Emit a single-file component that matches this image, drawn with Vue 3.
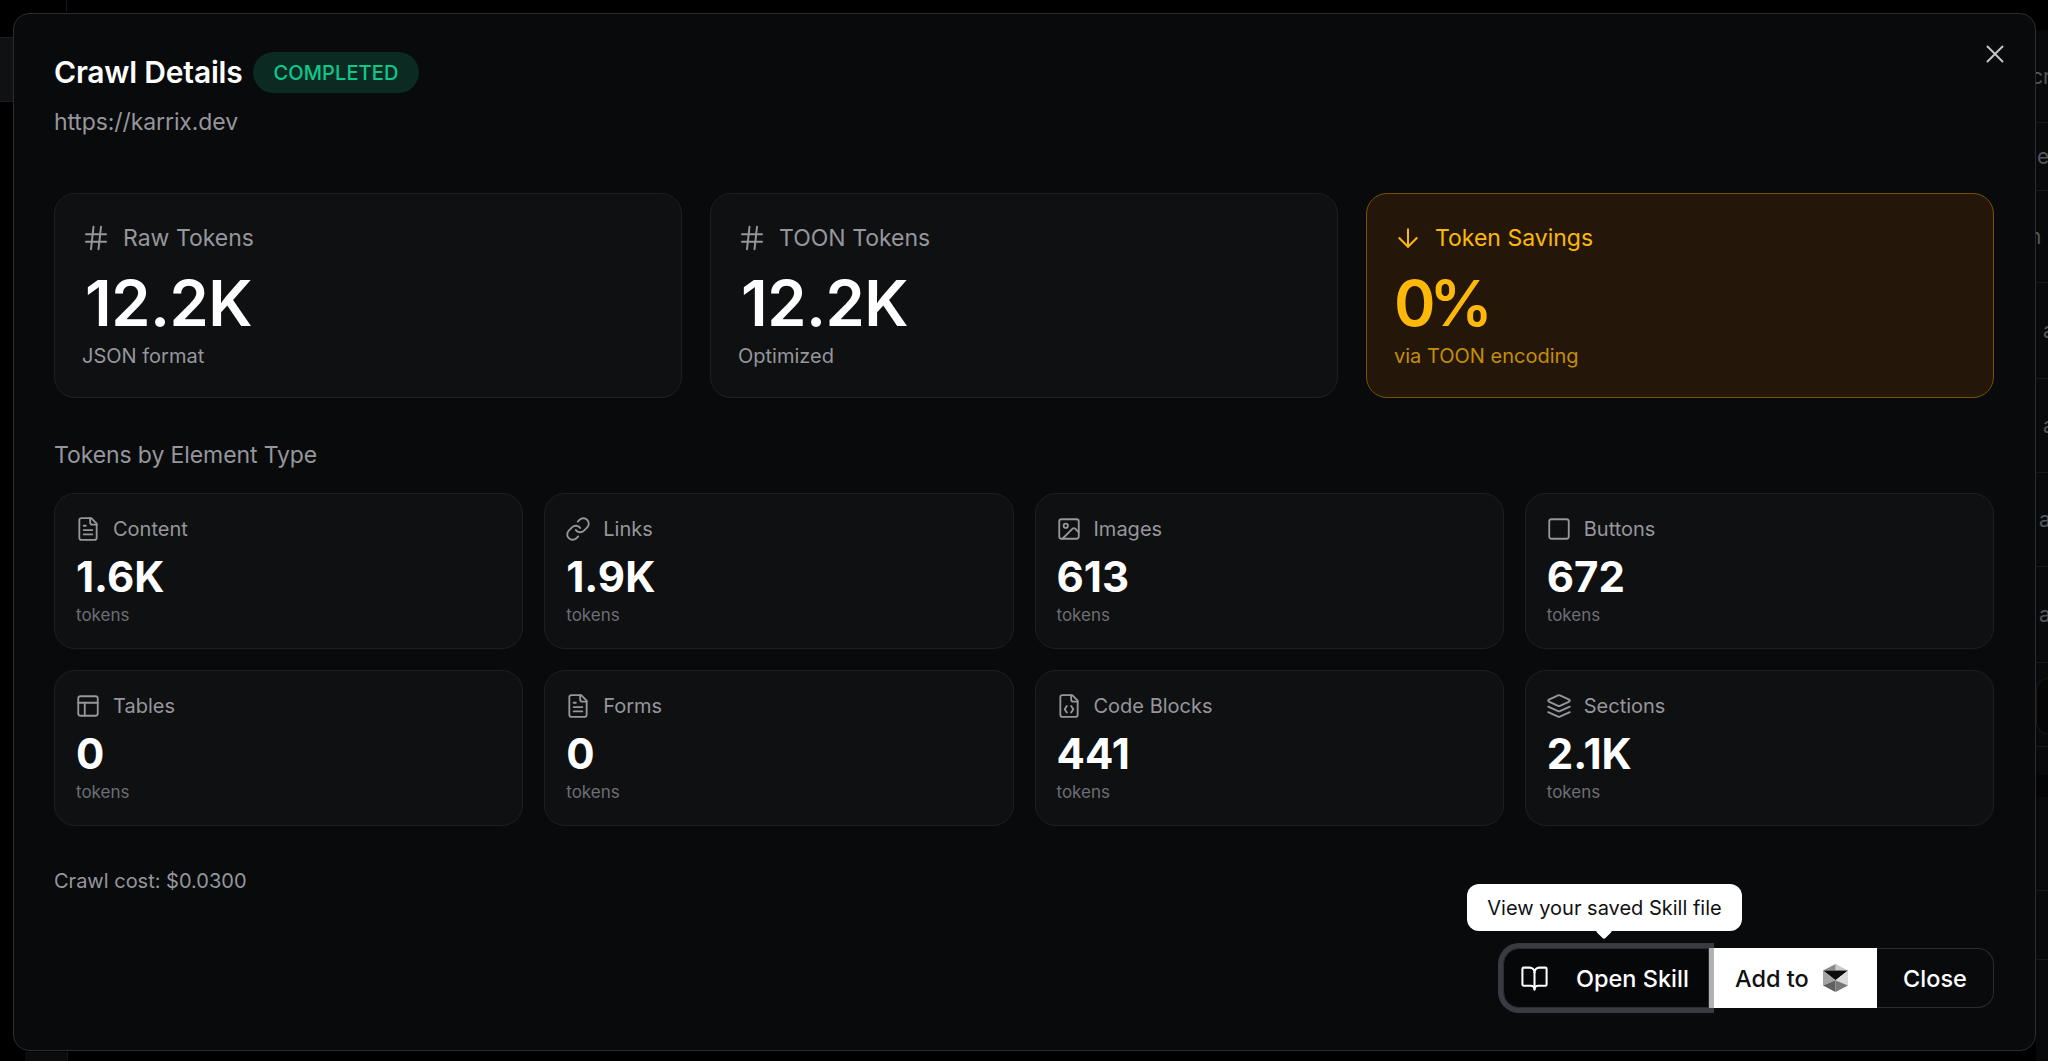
<script setup>
const topStats = [
  { label: 'Raw Tokens', value: '12.2K', note: 'JSON format', icon: 'hash' },
  { label: 'TOON Tokens', value: '12.2K', note: 'Optimized', icon: 'hash' },
  { label: 'Token Savings', value: '0%', note: 'via TOON encoding', icon: 'arrow', accent: true }
]

const elements = [
  { label: 'Content', value: '1.6K', icon: 'file' },
  { label: 'Links', value: '1.9K', icon: 'link' },
  { label: 'Images', value: '613', icon: 'image' },
  { label: 'Buttons', value: '672', icon: 'square' },
  { label: 'Tables', value: '0', icon: 'table' },
  { label: 'Forms', value: '0', icon: 'file' },
  { label: 'Code Blocks', value: '441', icon: 'code' },
  { label: 'Sections', value: '2.1K', icon: 'layers' }
]

// table rows of the page behind the modal, only their ends stick out
const behindRows = [
  { text: 'cr', height: 93, indent: -5 },
  { text: 'e', height: 68, indent: 1 },
  { text: 'n', height: 92, indent: -7 },
  { text: 'a', height: 96, indent: 7 },
  { text: 'a', height: 94, indent: 7 },
  { text: 'a', height: 94, indent: 0, bar: true },
  { text: 'a', height: 96, indent: 0, bar: true }
]
</script>

<template>
  <div class="page">
    <div class="behind-tick"></div>
    <div class="behind-left"></div>
    <div class="behind-right">
      <div
        v-for="(row, i) in behindRows"
        :key="i"
        class="behind-row"
        :style="{ height: row.height + 'px' }"
      >
        <i v-if="row.bar" class="behind-bar"></i>
        <span :style="{ marginLeft: row.indent + 'px' }">{{ row.text }}</span>
      </div>
      <div class="behind-box"><span></span></div>
      <div class="behind-band"></div>
      <div class="behind-line"></div>
      <div class="behind-line short"></div>
    </div>
    <div class="behind-bottom"></div>

    <section class="modal">
      <button class="x-btn" aria-label="Close">
        <svg viewBox="0 0 24 24" width="30" height="30" fill="none" stroke="currentColor" stroke-width="1.6" stroke-linecap="round" stroke-linejoin="round">
          <path d="M18 6 6 18" /><path d="m6 6 12 12" />
        </svg>
      </button>

      <header class="head">
        <div class="title-row">
          <h2>Crawl Details</h2>
          <span class="badge">COMPLETED</span>
        </div>
        <p class="url">https://karrix.dev</p>
      </header>

      <div class="top-grid">
        <div v-for="s in topStats" :key="s.label" :class="['top-card', { accent: s.accent }]">
          <div class="top-label">
            <svg viewBox="0 0 24 24" width="30" height="30" fill="none" stroke="currentColor" stroke-width="1.6" stroke-linecap="round" stroke-linejoin="round">
              <template v-if="s.icon === 'hash'">
                <line x1="4" x2="20" y1="9" y2="9" /><line x1="4" x2="20" y1="15" y2="15" />
                <line x1="10" x2="8" y1="3" y2="21" /><line x1="16" x2="14" y1="3" y2="21" />
              </template>
              <template v-else>
                <path d="M12 5v14" /><path d="m19 12-7 7-7-7" />
              </template>
            </svg>
            <span>{{ s.label }}</span>
          </div>
          <div class="top-value">{{ s.value }}</div>
          <div class="top-note">{{ s.note }}</div>
        </div>
      </div>

      <h3 class="section-label">Tokens by Element Type</h3>

      <div class="el-grid">
        <div v-for="el in elements" :key="el.label" class="el-card">
          <div class="el-label">
            <svg viewBox="0 0 24 24" width="26" height="26" fill="none" stroke="currentColor" stroke-width="1.7" stroke-linecap="round" stroke-linejoin="round">
              <template v-if="el.icon === 'file'">
                <path d="M15 2H6a2 2 0 0 0-2 2v16a2 2 0 0 0 2 2h12a2 2 0 0 0 2-2V7Z" />
                <path d="M14 2v4a2 2 0 0 0 2 2h4" /><path d="M10 9H8" /><path d="M16 13H8" /><path d="M16 17H8" />
              </template>
              <template v-else-if="el.icon === 'link'">
                <path d="M10 13a5 5 0 0 0 7.54.54l3-3a5 5 0 0 0-7.07-7.07l-1.72 1.71" />
                <path d="M14 11a5 5 0 0 0-7.54-.54l-3 3a5 5 0 0 0 7.07 7.07l1.71-1.71" />
              </template>
              <template v-else-if="el.icon === 'image'">
                <rect width="18" height="18" x="3" y="3" rx="2" /><circle cx="9" cy="9" r="2" />
                <path d="m21 15-3.086-3.086a2 2 0 0 0-2.828 0L6 21" />
              </template>
              <template v-else-if="el.icon === 'square'">
                <rect width="18" height="18" x="3" y="3" rx="2" />
              </template>
              <template v-else-if="el.icon === 'table'">
                <rect width="18" height="18" x="3" y="3" rx="2" /><path d="M3 9h18" /><path d="M9 21V9" />
              </template>
              <template v-else-if="el.icon === 'code'">
                <path d="M15 2H6a2 2 0 0 0-2 2v16a2 2 0 0 0 2 2h12a2 2 0 0 0 2-2V7Z" />
                <path d="M14 2v4a2 2 0 0 0 2 2h4" /><path d="m10 12-2 3 2 3" /><path d="m14 12 2 3-2 3" />
              </template>
              <template v-else>
                <path d="m12.83 2.18a2 2 0 0 0-1.66 0L2.6 6.08a1 1 0 0 0 0 1.83l8.58 3.91a2 2 0 0 0 1.66 0l8.58-3.9a1 1 0 0 0 0-1.83Z" />
                <path d="m22 17.65-9.17 4.16a2 2 0 0 1-1.66 0L2 17.65" /><path d="m22 12.65-9.17 4.16a2 2 0 0 1-1.66 0L2 12.65" />
              </template>
            </svg>
            <span>{{ el.label }}</span>
          </div>
          <div class="el-value">{{ el.value }}</div>
          <div class="el-note">tokens</div>
        </div>
      </div>

      <p class="cost">Crawl cost: $0.0300</p>

      <footer class="actions">
        <div class="tip">View your saved Skill file</div>
        <button class="btn btn-open">
          <svg viewBox="0 0 24 24" width="29" height="29" fill="none" stroke="currentColor" stroke-width="1.7" stroke-linecap="round" stroke-linejoin="round">
            <path d="M12 7v14" />
            <path d="M3 18a1 1 0 0 1-1-1V4a1 1 0 0 1 1-1h5a4 4 0 0 1 4 4 4 4 0 0 1 4-4h5a1 1 0 0 1 1 1v13a1 1 0 0 1-1 1h-6a3 3 0 0 0-3 3 3 3 0 0 0-3-3z" />
          </svg>
          <span>Open Skill</span>
        </button>
        <button class="btn btn-add">
          <span>Add to</span>
          <svg viewBox="2 1 20 26" width="25" height="28" preserveAspectRatio="none">
            <path d="M12 1 22 7 12 7Z" fill="#c9c9c9" /><path d="M12 1 2 7 12 7Z" fill="#8a8a8a" />
            <path d="M2 7H22L12 16Z" fill="#0d0d0d" />
            <path d="M2 7 12 16 2 21Z" fill="#a5a5a5" /><path d="M22 7 12 16 22 21Z" fill="#dcdcdc" />
            <path d="M2 21 12 16 12 27Z" fill="#5f5f5f" /><path d="M22 21 12 16 12 27Z" fill="#777" />
          </svg>
        </button>
        <button class="btn btn-close">Close</button>
      </footer>
    </section>
  </div>
</template>

<style scoped>
.page {
  position: relative;
  height: 1061px;
  overflow: hidden;
  background: #000;
  font-family: Inter, "Liberation Sans", sans-serif;
}

.behind-tick {
  position: absolute;
  left: 66px;
  top: 0;
  width: 1px;
  height: 12px;
  background: #17181a;
}

.behind-left {
  position: absolute;
  left: 0;
  top: 37px;
  width: 13px;
  height: 63px;
  background: #101113;
  border-top: 1px solid #1c1d20;
  border-bottom: 1px solid #1c1d20;
}

.behind-right {
  position: absolute;
  left: 2036px;
  top: 30px;
  width: 12px;
  height: 1031px;
  background: #08090a;
  display: flex;
  flex-direction: column;
}

.behind-row {
  box-sizing: border-box;
  display: flex;
  align-items: center;
  gap: 3px;
  font-size: 21px;
  color: #55565a;
  border-bottom: 1px solid #17181a;
  white-space: nowrap;
}

.behind-bar {
  width: 2px;
  height: 20px;
  background: #55565a;
}

.behind-box {
  height: 84px;
  box-sizing: border-box;
  padding-top: 15px;
  border-bottom: 1px solid #17181a;
}

.behind-box span {
  display: block;
  height: 54px;
  background: #050506;
  border: 1px solid #17181a;
  border-right: none;
  border-radius: 14px 0 0 14px;
}

.behind-band {
  height: 22px;
  margin-top: 28px;
  background: #040405;
}

.behind-line {
  height: 93px;
  border-bottom: 1px solid #17181a;
}

.behind-line.short {
  height: 68px;
}

.behind-bottom {
  position: absolute;
  left: 25px;
  top: 1052px;
  width: 42px;
  height: 9px;
  background: #0b0c0d;
  border-right: 1px solid #17181a;
}

.modal {
  position: absolute;
  left: 13px;
  top: 13px;
  width: 2023px;
  height: 1038px;
  box-sizing: border-box;
  padding: 38px 41px 0 40px;
  background: #090a0c;
  border: 1px solid #2b2c30;
  border-radius: 16px;
  color: #fff;
  display: flex;
  flex-direction: column;
}

.x-btn {
  position: absolute;
  top: 25px;
  right: 25px;
  padding: 0;
  display: flex;
  background: none;
  border: none;
  color: #c4c4c8;
}

.title-row {
  display: flex;
  align-items: center;
  gap: 10px;
}

h2 {
  margin: 0;
  font-size: 30px;
  line-height: 41px;
  font-weight: 600;
  letter-spacing: -0.2px;
}

.badge {
  height: 41px;
  padding: 0 21px;
  display: flex;
  align-items: center;
  background: #0a2a22;
  border-radius: 21px;
  color: #10c78a;
  font-size: 20px;
  font-weight: 500;
  letter-spacing: 0.1px;
}

.url {
  margin: 13px 0 0;
  font-size: 23px;
  line-height: 32px;
  letter-spacing: -0.1px;
  color: #96969c;
}

.top-grid {
  margin-top: 55px;
  display: grid;
  grid-template-columns: repeat(3, 1fr);
  gap: 28px;
}

.top-card {
  height: 205px;
  box-sizing: border-box;
  padding: 30px 27px;
  background: #0f1012;
  border: 1px solid #1e1f22;
  border-radius: 21px;
}

.top-label {
  display: flex;
  align-items: center;
  gap: 12px;
  height: 28px;
  font-size: 23px;
  color: #96969c;
}

.top-label svg {
  margin-left: -1px;
}

.top-value {
  margin: 18px 0 0 3px;
  font-size: 63px;
  line-height: 66px;
  font-weight: 600;
  letter-spacing: -0.5px;
}

.top-note {
  margin-top: 6px;
  font-size: 20px;
  line-height: 28px;
  color: #96969c;
}

.top-card.accent {
  background: #241709;
  border-color: #7a5006;
}

.accent .top-label,
.accent .top-value {
  color: #fdb80a;
}

.accent .top-value {
  margin-left: 0;
  letter-spacing: -6px;
}

.accent .top-note {
  color: #c58e07;
}

.section-label {
  margin: 41px 0 0;
  font-size: 23px;
  line-height: 32px;
  font-weight: 400;
  letter-spacing: -0.1px;
  color: #96969c;
}

.el-grid {
  margin-top: 22px;
  display: grid;
  grid-template-columns: repeat(4, 1fr);
  gap: 21px;
}

.el-card {
  height: 156px;
  box-sizing: border-box;
  padding: 21px;
  background: #0f1012;
  border: 1px solid #1e1f22;
  border-radius: 21px;
}

.el-label {
  display: flex;
  align-items: center;
  gap: 12px;
  height: 28px;
  font-size: 20px;
  color: #96969c;
}

.el-label svg {
  margin-left: -1px;
}

.el-value {
  margin-top: 10px;
  font-size: 42px;
  line-height: 48px;
  font-weight: 700;
}

.el-note {
  margin-top: 2px;
  font-size: 17px;
  line-height: 24px;
  color: #6e6e74;
}

.cost {
  margin: 41px 0 0;
  font-size: 20px;
  line-height: 28px;
  color: #96969c;
}

.actions {
  position: relative;
  margin-top: 53px;
  display: flex;
  justify-content: flex-end;
}

.btn {
  height: 60px;
  box-sizing: border-box;
  display: flex;
  align-items: center;
  font-family: inherit;
  font-size: 23.5px;
  font-weight: 500;
  border: 1px solid #2b2c30;
  background: #090a0c;
  color: #fff;
}

.btn-open {
  width: 206px;
  padding: 0 0 0 16px;
  gap: 27px;
  background: #060709;
  border-radius: 16px 0 0 16px;
  position: relative;
  z-index: 1;
  box-shadow: 0 0 0 5px rgba(104, 106, 115, 0.52);
}

.btn-add {
  width: 168px;
  padding: 0 0 0 26px;
  gap: 14px;
  background: #fff;
  color: #111;
  border: none;
}

.btn-close {
  width: 117px;
  justify-content: center;
  border-left: none;
  border-radius: 0 16px 16px 0;
}

.tip {
  position: absolute;
  z-index: 2;
  right: 252px;
  top: -64px;
  width: 275px;
  height: 47px;
  display: flex;
  align-items: center;
  justify-content: center;
  background: #fff;
  color: #111;
  border-radius: 12px;
  font-size: 20px;
}

.tip::after {
  content: "";
  position: absolute;
  left: 131px;
  bottom: -6px;
  width: 12px;
  height: 12px;
  background: #fff;
  transform: rotate(45deg);
  border-radius: 2px;
}
</style>

<style>
html, body {
  margin: 0;
  background: #000;
}
</style>
